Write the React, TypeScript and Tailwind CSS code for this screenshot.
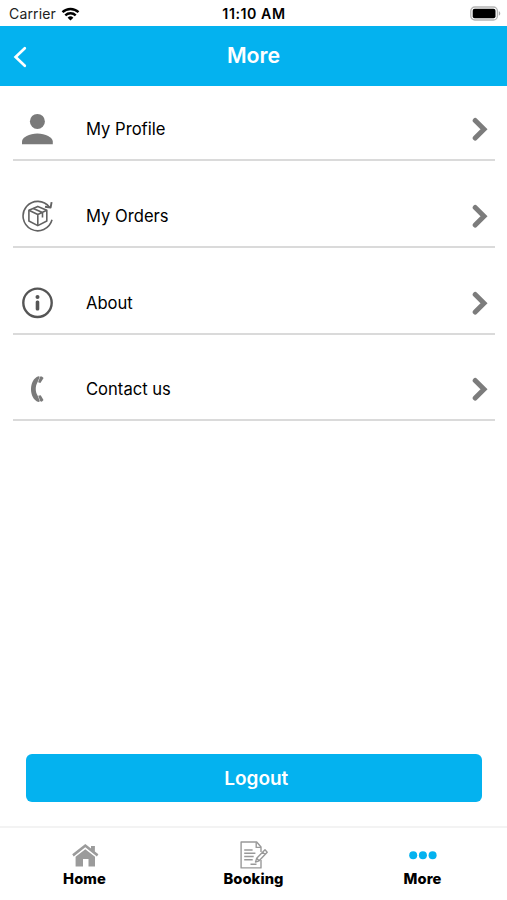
import type { ReactNode } from "react";

type MenuItem = {
  label: string;
  icon: ReactNode;
};

function WifiIcon() {
  return (
    <svg width="19" height="14" viewBox="0 0 18 14" fill="none" stroke="#000" strokeWidth="2.4">
      <path d="M1 5.2a11.6 11.6 0 0 1 16 0" />
      <path d="M3.8 8.3a7.5 7.5 0 0 1 10.4 0" />
      <path d="M9 13.6 6.1 10.7a4.2 4.2 0 0 1 5.8 0z" fill="#000" stroke="none" />
    </svg>
  );
}

function BatteryIcon() {
  return (
    <svg width="31" height="15" viewBox="0 0 31 15">
      <rect x="0.8" y="1" width="26.6" height="13" rx="4" fill="#fff" stroke="#b5b5b5" strokeWidth="1.3" />
      <rect x="2.7" y="2.8" width="22.8" height="9.4" rx="2" fill="#000" />
      <path d="M28.8 5.3c1.9.7 1.9 3.7 0 4.4z" fill="#a8a8a8" />
    </svg>
  );
}

function ProfileIcon() {
  return (
    <svg width="32" height="32" viewBox="0 0 32 32" fill="#7a7a7a">
      <circle cx="16.4" cy="8.4" r="7.5" />
      <path d="M1 31.2v-2.8c0-4 7.4-7.9 15.4-7.9s15.4 3.9 15.4 7.9v2.8z" />
    </svg>
  );
}

function OrdersIcon() {
  return (
    <svg width="32" height="32" viewBox="0 0 32 32" fill="none" stroke="#626262" strokeWidth="1.6" strokeLinejoin="round">
      <path d="M31 19.8A14.7 14.7 0 1 1 28.5 7.2" />
      <path d="M30.6 2.2 29.6 7.6 24 6.8" strokeWidth="1.9" />
      <path d="M16.8 6.4 25.8 10.2V21L16.8 25.6 7.9 21V10.2z" />
      <path d="M7.9 10.2 16.8 14.5 25.8 10.2M16.8 14.5v11.1M12.3 8.4l9.2 4.2v5" />
    </svg>
  );
}

function AboutIcon() {
  return (
    <svg width="32" height="32" viewBox="0 0 32 32" fill="#555">
      <circle cx="16.5" cy="15.8" r="14.2" fill="none" stroke="#555" strokeWidth="2.4" />
      <circle cx="16.5" cy="10" r="2" />
      <rect x="14.7" y="13.6" width="3.6" height="9.8" rx="1.5" />
    </svg>
  );
}

function PhoneIcon() {
  return (
    <svg width="32" height="32" viewBox="0 0 32 32" fill="#7a7a7a">
      <path d="M17.4 3.2C7.6 6.6 7.6 25.6 17.4 28.9L18.9 28.2 16.6 22.6C14.2 19 14.2 13 16.4 9.6L18.8 3.8z" />
      <path d="M19.2 3.5 20.9 3.4 22.6 5 19.4 9.9 17.1 9.3zM17.2 22.7 19.7 22.2 22.5 26.9 20.8 28.7 19.3 28.2z" />
    </svg>
  );
}

function HomeIcon() {
  return (
    <svg width="28" height="26" viewBox="0 0 28 26" fill="#9b9b9b">
      <path d="M14.3 1.9 27.4 12.3 25.9 14.4 14.3 5.3 2.7 14.4 1.2 12.3z" />
      <path d="M20 4.1H23.9V10.3L20 7.2z" />
      <path d="M14.3 7.2 24 14.7V24.6H17.5V17H12V24.6H4.6V14.7z" />
    </svg>
  );
}

function BookingIcon() {
  return (
    <svg width="28" height="28" viewBox="0 0 28 28" fill="none" stroke="#999" strokeWidth="1.4" strokeLinejoin="round">
      <path d="M21 11V6L16.7 1H1.1V26.9H21V19" />
      <path d="M16.2 1.2V6.4H21" />
      <path d="M4.2 9h8.4M4.2 12.2h11.2M4.2 15.5h9.5M4.2 18.7h8.5M10.5 23.3h6" />
      <path d="M25 8.8 27.2 11.2 19.1 19.8 15.5 21.1 16.7 17.3zM22.7 11.2l2.3 2.4M16.7 17.3l2.4 2.5" />
    </svg>
  );
}

function DotsIcon() {
  return (
    <svg width="28" height="10" viewBox="0 0 28 10" fill="#04b2ef">
      <circle cx="4.2" cy="5.2" r="4" />
      <circle cx="13.9" cy="5.2" r="4" />
      <circle cx="23.6" cy="5.2" r="4" />
    </svg>
  );
}

function Chevron() {
  return (
    <svg width="18" height="24" viewBox="0 0 18 24" fill="none" stroke="#7c7c7c" strokeWidth="5">
      <path d="M4.2 3.4 13 12.2 4.2 21" strokeLinecap="round" />
    </svg>
  );
}

const menu: MenuItem[] = [
  { label: "My Profile", icon: <ProfileIcon /> },
  { label: "My Orders", icon: <OrdersIcon /> },
  { label: "About", icon: <AboutIcon /> },
  { label: "Contact us", icon: <PhoneIcon /> },
];

const tabs: MenuItem[] = [
  { label: "Home", icon: <HomeIcon /> },
  { label: "Booking", icon: <BookingIcon /> },
  { label: "More", icon: <DotsIcon /> },
];

export default function App() {
  return (
    <div className="flex h-[900px] w-[507px] flex-col overflow-hidden bg-white font-['Inter',sans-serif] text-black">
      <div className="grid h-[25.5px] shrink-0 grid-cols-3 items-center pt-0.5 pr-1.5 pl-[9px]">
        <div className="flex items-center gap-[5px] text-[14px] text-[#222]">
          <span className="tracking-[0.15px]">Carrier</span>
          <WifiIcon />
        </div>
        <span className="pr-0.5 text-center text-[14.2px] font-semibold tracking-[0.55px] whitespace-nowrap">
          11:10 AM
        </span>
        <div className="flex justify-end">
          <BatteryIcon />
        </div>
      </div>

      <header className="grid h-[60.5px] shrink-0 grid-cols-[40px_1fr_40px] items-center bg-[#04b2ef] text-white">
        <button aria-label="Back" className="pt-[3px] pl-3">
          <svg width="16" height="22" viewBox="0 0 16 22" fill="none" stroke="currentColor" strokeWidth="2.7">
            <path d="M12.8 2.2 3.6 11 12.8 19.8" strokeLinecap="round" />
          </svg>
        </button>
        <h1 className="pt-px text-center text-[21.3px] font-semibold">More</h1>
      </header>

      <nav className="flex flex-col gap-[23.7px] pt-[12.3px] pr-3 pl-[13px]">
        {menu.map((item) => (
          <button
            key={item.label}
            className="flex h-[63px] items-center border-b-2 border-[#dadada] pt-px pr-1.5 pl-2 text-left"
          >
            {item.icon}
            <span className="ml-[33px] flex-1 pt-px text-[16.6px]">{item.label}</span>
            <Chevron />
          </button>
        ))}
      </nav>

      <div className="mt-auto pr-[25.5px] pb-6 pl-[26px]">
        <button className="h-12 w-full rounded-md bg-[#04b2ef] pt-0.5 pl-[5px] text-[19px] font-semibold text-white">
          Logout
        </button>
      </div>

      <footer className="grid h-[74px] shrink-0 grid-cols-3 border-t-2 border-[#f3f3f3] pt-[13px]">
        {tabs.map((tab) => (
          <button key={tab.label} className="flex flex-col items-center">
            <span className="flex h-7 items-center">{tab.icon}</span>
            <span className="text-[14.7px] leading-5 font-extrabold tracking-[0.1px]">{tab.label}</span>
          </button>
        ))}
      </footer>
    </div>
  );
}
